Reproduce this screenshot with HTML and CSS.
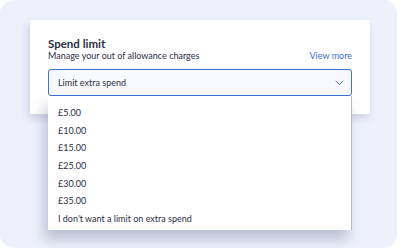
FILE: index.html
```html
<!DOCTYPE html>
<html lang="en">

<head>
    <meta charset="UTF-8">
    <meta name="viewport" content="width=device-width, initial-scale=1.0">
    <title>Spend limit</title>
    <link rel="stylesheet" href="styles.css">
</head>

<body>
    <div class="frame">
        <div class="card">
            <h2>Spend limit</h2>
            <div class="card-sub">
                <p>Manage your out of allowance charges</p>
                <a href="#">View more</a>
            </div>
            <div class="select">
                <span>Limit extra spend</span>
                <svg class="chevron" width="9" height="6" viewBox="0 0 9 6">
                    <path d="M1 1.2l3.5 3.3L8 1.2" fill="none" stroke="currentColor" stroke-width="1" stroke-linecap="round" stroke-linejoin="round" />
                </svg>
                <ul class="menu">
                    <li>£5.00</li>
                    <li>£10.00</li>
                    <li>£15.00</li>
                    <li>£25.00</li>
                    <li>£30.00</li>
                    <li>£35.00</li>
                    <li>I don't want a limit on extra spend</li>
                </ul>
            </div>
        </div>
    </div>
</body>

</html>
```

FILE: styles.css
```css
:root {
    --frame-color: #eef0fc;
    --text-color: #2c3044;
    --primary-color: #3d6fd6;
    --menu-edge: #b4b7c5;
}

body {
    margin: 0;
    background-color: #ffffff;
    font-family: 'Lato', Arial, sans-serif;
    color: var(--text-color);
}

.frame {
    width: 397px;
    height: 248px;
    box-sizing: border-box;
    background-color: var(--frame-color);
    border-radius: 14px;
    padding: 20px 0 0 30px;
}

.card {
    width: 340px;
    height: 94px;
    box-sizing: border-box;
    background-color: #ffffff;
    padding: 17px 18px 0;
    box-shadow: -2px 4px 8px rgba(70, 74, 110, 0.18);
}

.card h2 {
    margin: 0;
    font-size: 11.5px;
    line-height: 13px;
    font-weight: 700;
}

.card-sub {
    display: flex;
    justify-content: space-between;
    align-items: flex-end;
}

.card-sub p {
    margin: 0;
    font-size: 9px;
    line-height: 11px;
}

.card-sub a {
    color: var(--primary-color);
    text-decoration: none;
    font-size: 9px;
    line-height: 11px;
}

.select {
    position: relative;
    margin-top: 8px;
    height: 27px;
    box-sizing: border-box;
    border: 1px solid var(--primary-color);
    border-radius: 3px;
    background-color: #f8f9fe;
    display: flex;
    align-items: center;
    justify-content: space-between;
    padding: 0 7px 0 9px;
    font-size: 9px;
}

.chevron {
    color: var(--primary-color);
}

.menu {
    position: absolute;
    top: 26px;
    left: -1px;
    right: -1px;
    margin: 0;
    padding: 8px 0 2px;
    list-style: none;
    background-color: #ffffff;
    border-right: 1px solid var(--menu-edge);
    box-shadow: -4px 10px 12px rgba(70, 74, 110, 0.28);
}

.menu li {
    height: 17.7px;
    line-height: 17.7px;
    padding-left: 10px;
    font-size: 9px;
}
```
